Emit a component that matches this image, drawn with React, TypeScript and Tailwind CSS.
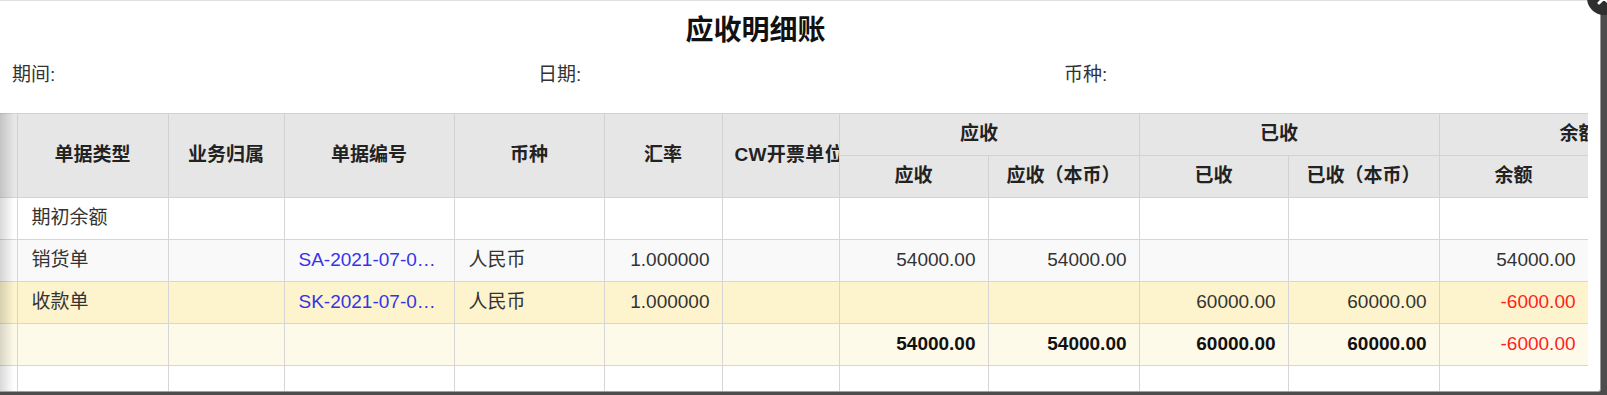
import React from "react";

const th = "border border-[#d2d2d2] bg-[#e6e6e6] px-3 font-bold text-center whitespace-nowrap overflow-hidden text-[#222]";
const td = "border border-[#d6d6d6] pl-[14px] pr-3 whitespace-nowrap overflow-hidden text-ellipsis";
const num = "border border-[#d6d6d6] pl-3 pr-3 text-right whitespace-nowrap overflow-hidden";

type Row = {
    type: string;
    code?: string;
    currency?: string;
    rate?: string;
    ar?: string;
    arBase?: string;
    rec?: string;
    recBase?: string;
    balance?: string;
    bg: string;
    bold?: boolean;
};

const rows: Row[] = [
    { type: "期初余额", bg: "bg-white" },
    {
        type: "销货单",
        code: "SA-2021-07-00012",
        currency: "人民币",
        rate: "1.000000",
        ar: "54000.00",
        arBase: "54000.00",
        balance: "54000.00",
        bg: "bg-[#f9f9f9]",
    },
    {
        type: "收款单",
        code: "SK-2021-07-00008",
        currency: "人民币",
        rate: "1.000000",
        rec: "60000.00",
        recBase: "60000.00",
        balance: "-6000.00",
        bg: "bg-[#fdf4cd]",
    },
    {
        type: "",
        ar: "54000.00",
        arBase: "54000.00",
        rec: "60000.00",
        recBase: "60000.00",
        balance: "-6000.00",
        bg: "bg-[#fefae9]",
        bold: true,
    },
    { type: "", bg: "bg-white" },
];

function App() {
    return (
        <div className="relative w-[1607px] h-[395px] overflow-hidden bg-[#4d4d4d] font-['Liberation_Sans','Noto_Sans_CJK_SC',sans-serif] text-[#333]">
            <div className="w-[1601px] h-[392px] bg-white border-t border-t-[#e0e0e0] border-r border-r-[#9a9a9a] border-b border-b-[#a0a0a0] rounded-br-[3px] overflow-hidden">
                <div className="w-[1511px] h-[59px] flex items-center justify-center">
                    <h1 className="text-[28px] font-bold text-[#111] leading-none">应收明细账</h1>
                </div>

                <div className="h-[30px] pl-3 grid grid-cols-[526px_526px_526px] items-center text-[19px] text-[#333]">
                    <span>期间:</span>
                    <span>日期:</span>
                    <span>币种:</span>
                </div>

                <div className="relative mt-[23px] w-[1588px] overflow-hidden">
                    <table className="table-fixed border-collapse text-[19px] w-[1738px]">
                        <colgroup>
                            <col className="w-[17px]" />
                            <col className="w-[151px]" />
                            <col className="w-[116px]" />
                            <col className="w-[170px]" />
                            <col className="w-[150px]" />
                            <col className="w-[118px]" />
                            <col className="w-[117px]" />
                            <col className="w-[149px]" />
                            <col className="w-[151px]" />
                            <col className="w-[149px]" />
                            <col className="w-[151px]" />
                            <col className="w-[149px]" />
                            <col className="w-[150px]" />
                        </colgroup>
                        <thead>
                            <tr className="h-[42px]">
                                <th rowSpan={2} className="border-y border-r border-[#d2d2d2] bg-[#e6e6e6]"></th>
                                <th rowSpan={2} className={th}>单据类型</th>
                                <th rowSpan={2} className={th}>业务归属</th>
                                <th rowSpan={2} className={th}>单据编号</th>
                                <th rowSpan={2} className={th}>币种</th>
                                <th rowSpan={2} className={th}>汇率</th>
                                <th rowSpan={2} className={th + " tracking-[0.3px]"}>CW开票单位</th>
                                <th colSpan={2} className={th + " pr-[32px]"}>应收</th>
                                <th colSpan={2} className={th + " pr-[32px]"}>已收</th>
                                <th colSpan={2} className={th + " pr-[32px]"}>余额</th>
                            </tr>
                            <tr className="h-[42px]">
                                <th className={th}>应收</th>
                                <th className={th}>应收（本币）</th>
                                <th className={th}>已收</th>
                                <th className={th}>已收（本币）</th>
                                <th className={th}>余额</th>
                                <th className={th}>余额（本币）</th>
                            </tr>
                        </thead>
                        <tbody>
                            {rows.map((r, i) => (
                                <tr key={i} className={"h-[42px] " + r.bg}>
                                    <td className="border-y border-r border-[#d6d6d6]"></td>
                                    <td className={td}>{r.type}</td>
                                    <td className={td}></td>
                                    <td className={td + " text-[#3434ea]"}>{r.code}</td>
                                    <td className={td}>{r.currency}</td>
                                    <td className={num}>{r.rate}</td>
                                    <td className={td}></td>
                                    <td className={num + (r.bold ? " font-bold text-[#111]" : "")}>{r.ar}</td>
                                    <td className={num + (r.bold ? " font-bold text-[#111]" : "")}>{r.arBase}</td>
                                    <td className={num + (r.bold ? " font-bold text-[#111]" : "")}>{r.rec}</td>
                                    <td className={num + (r.bold ? " font-bold text-[#111]" : "")}>{r.recBase}</td>
                                    <td className={num + (r.balance?.startsWith("-") ? " text-[#ff1f1f]" : "")}>
                                        {r.balance}
                                    </td>
                                    <td className={num}></td>
                                </tr>
                            ))}
                        </tbody>
                    </table>
                    {/* shadow of the frozen column */}
                    <div className="pointer-events-none absolute left-0 top-0 bottom-0 w-[14px] bg-gradient-to-r from-black/15 to-transparent" />
                </div>
            </div>

            {/* layer close button */}
            <div className="absolute left-[1587px] top-[-19px] w-[34px] h-[34px] rounded-full bg-[#2f2f2f] flex items-center justify-center">
                <svg width="16" height="16" viewBox="0 0 16 16" fill="none" stroke="white" strokeWidth="3" strokeLinecap="round">
                    <path d="M3 3l10 10M13 3L3 13" />
                </svg>
            </div>
        </div>
    );
}

export default App;
